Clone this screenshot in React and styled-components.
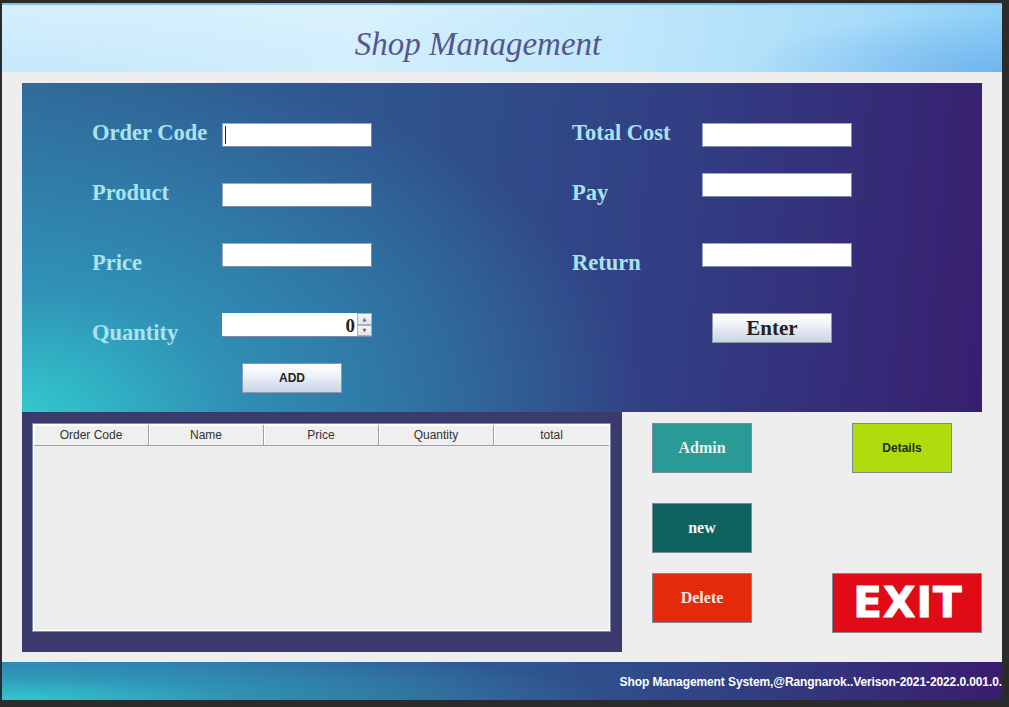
import styled, { createGlobalStyle } from 'styled-components';

const GlobalStyle = createGlobalStyle`
    html, body {
        margin: 0;
        padding: 0;
        background: #2b2b2b;
    }
    * {
        box-sizing: border-box;
    }
`;

const Screen = styled.div`
    width: 1009px;
    height: 707px;
    padding: 3px 7px 7px 2px;
    background: #2b2b2b;
    overflow: hidden;
`;

const Window = styled.div`
    width: 1000px;
    height: 697px;
    display: flex;
    flex-direction: column;
    background: #eeeeee;
`;

const Header = styled.header`
    height: 69px;
    display: flex;
    align-items: center;
    justify-content: center;
    padding: 12px 48px 0 0;
    background:
        radial-gradient(ellipse 260px 60px at 100% 100%, rgba(100, 170, 235, 0.7) 0, rgba(100, 170, 235, 0) 100%),
        linear-gradient(172deg, rgba(255, 255, 255, 0.35) 0%, rgba(255, 255, 255, 0) 45%),
        linear-gradient(100deg, #bfe6fb 0%, #d4effd 35%, #c2e8fb 60%, #a8dcf9 85%, #8ccff6 100%);
    border-top: 2px solid #7fc0ea;
`;

const Title = styled.h1`
    margin: 0;
    font-family: "Liberation Serif", "DejaVu Serif", serif;
    font-style: italic;
    font-weight: normal;
    font-size: 33px;
    color: #55578c;
`;

const Body = styled.main`
    flex: 1;
    padding: 11px 20px 10px 20px;
    display: flex;
    flex-direction: column;
`;

const FormPanel = styled.section`
    height: 329px;
    display: grid;
    grid-template-columns: 480px 1fr;
    padding: 40px 0 0 70px;
    background:
        radial-gradient(ellipse 620px 360px at 0% 100%, rgba(50, 200, 206, 1) 0, rgba(48, 160, 192, 0.75) 35%, rgba(47, 120, 170, 0) 100%),
        linear-gradient(95deg, #2f6597 0%, #2f528e 40%, #323c82 70%, #381f70 100%);
`;

const Column = styled.div`
    display: flex;
    flex-direction: column;
`;

const Row = styled.div`
    display: grid;
    grid-template-columns: 130px 150px;
    align-items: start;
    height: 24px;
    margin-top: ${(p) => p.$gap || 0}px;
`;

const Label = styled.label`
    font-family: "Liberation Serif", "DejaVu Serif", serif;
    font-weight: bold;
    font-size: 22.5px;
    line-height: 24px;
    color: #a9e3f2;
    white-space: nowrap;
    margin-top: ${(p) => p.$shift || 0}px;
`;

const TextBox = styled.div`
    width: 150px;
    height: 24px;
    background: #ffffff;
    border: 1px solid #7d8bab;
    border-top-color: #9aa6c0;
    border-left-color: #9aa6c0;
    box-shadow: inset 1px 1px 0 #ffffff;
    position: relative;
`;

const Caret = styled.span`
    position: absolute;
    left: 2px;
    top: 2px;
    bottom: 2px;
    width: 1px;
    background: #222;
`;

const Spinner = styled.div`
    width: 150px;
    height: 24px;
    display: flex;
    background: #ffffff;
    border-bottom: 1px solid #7d8bab;
`;

const SpinValue = styled.div`
    flex: 1;
    text-align: right;
    padding-right: 2px;
    font-family: "Liberation Serif", serif;
    font-weight: bold;
    font-size: 19px;
    line-height: 26px;
    color: #222;
`;

const SpinArrows = styled.div`
    width: 15px;
    display: flex;
    flex-direction: column;
`;

const SpinArrow = styled.div`
    flex: 1;
    display: flex;
    align-items: center;
    justify-content: center;
    background: linear-gradient(#f6f6f6, #dfe3ea);
    border: 1px solid #a8b0c0;
    font-size: 5px;
    color: #666;
    font-family: "DejaVu Sans", sans-serif;
`;

const GlossButton = styled.button`
    width: ${(p) => p.$w}px;
    height: ${(p) => p.$h}px;
    margin-top: ${(p) => p.$top}px;
    margin-left: ${(p) => p.$left}px;
    padding: 0;
    border: 1px solid #8a9ab2;
    background: linear-gradient(#ffffff 0%, #eef2f8 40%, #c9d3e3 100%);
    color: #222;
    font-family: ${(p) => (p.$serif ? '"Liberation Serif", serif' : '"Liberation Sans", Arial, sans-serif')};
    font-weight: bold;
    font-size: ${(p) => p.$size}px;
    cursor: pointer;
`;

const Lower = styled.div`
    height: 240px;
    display: flex;
`;

const TableFrame = styled.div`
    width: 600px;
    height: 240px;
    padding: 11px 11px 20px 10px;
    background: #3b3a6d;
`;

const Table = styled.div`
    height: 100%;
    border: 1px solid #7d8bab;
    box-shadow: inset 0 0 0 1px #ffffff;
    background: #eeeeee;
    padding: 1px;
`;

const HeadRow = styled.div`
    display: grid;
    grid-template-columns: repeat(5, 1fr);
    height: 20px;
`;

const HeadCell = styled.div`
    border-right: 1px solid #a0a0a0;
    border-bottom: 1px solid #a0a0a0;
    background: #efefef;
    box-shadow: inset 1px 1px 0 #ffffff;
    text-align: center;
    font-family: "Liberation Sans", Arial, sans-serif;
    font-size: 12px;
    line-height: 20px;
    color: #333;

    &:last-child {
        border-right: none;
    }
`;

const ActionGrid = styled.div`
    display: grid;
    grid-template-columns: 180px 150px;
    grid-template-rows: 80px 70px 60px;
    align-items: start;
    padding: 11px 0 0 30px;
`;

const ActionButton = styled.button`
    width: ${(p) => p.$w || 100}px;
    height: ${(p) => p.$h || 50}px;
    margin-left: ${(p) => p.$left || 0}px;
    padding: 0;
    border: 1px solid #7b8a99;
    background: ${(p) => p.$bg};
    color: ${(p) => p.$fg};
    font-family: ${(p) => (p.$serif ? '"Liberation Serif", serif' : '"Liberation Sans", Arial, sans-serif')};
    font-weight: bold;
    font-size: ${(p) => p.$size || 16}px;
    cursor: pointer;
`;

const ExitButton = styled.button`
    width: 150px;
    height: 60px;
    padding: 0 0 0 2px;
    border: 1px solid #7b8a99;
    background: #e10a17;
    color: #ffffff;
    font-family: "DejaVu Sans", "Liberation Sans", sans-serif;
    font-weight: 900;
    font-size: 42px;
    line-height: 1;
    letter-spacing: 1px;
    -webkit-text-stroke: 1px #ffffff;
    cursor: pointer;
`;

const Footer = styled.footer`
    height: 38px;
    display: flex;
    align-items: center;
    justify-content: flex-end;
    overflow: hidden;
    background:
        radial-gradient(ellipse 600px 60px at 0% 100%, rgba(50, 200, 206, 1) 0, rgba(48, 170, 196, 0.6) 40%, rgba(47, 120, 170, 0) 100%),
        linear-gradient(90deg, #2f7aa8 0%, #2f5e94 40%, #2f4a8a 65%, #35307a 85%, #3a1c6e 100%);
`;

const FooterText = styled.span`
    font-family: "Liberation Sans", Arial, sans-serif;
    font-weight: bold;
    font-size: 12px;
    letter-spacing: -0.1px;
    color: #ffffff;
    white-space: nowrap;
    padding-top: 2px;
`;

const columns = ['Order Code', 'Name', 'Price', 'Quantity', 'total'];

function App() {
    return (
        <>
            <GlobalStyle />
            <Screen>
                <Window>
                    <Header>
                        <Title>Shop Management</Title>
                    </Header>
                    <Body>
                        <FormPanel>
                            <Column>
                                <Row>
                                    <Label $shift={-2}>Order Code</Label>
                                    <TextBox><Caret /></TextBox>
                                </Row>
                                <Row $gap={36}>
                                    <Label $shift={-2}>Product</Label>
                                    <TextBox />
                                </Row>
                                <Row $gap={36}>
                                    <Label $shift={8}>Price</Label>
                                    <TextBox />
                                </Row>
                                <Row $gap={46}>
                                    <Label $shift={8}>Quantity</Label>
                                    <Spinner>
                                        <SpinValue>0</SpinValue>
                                        <SpinArrows>
                                            <SpinArrow>▲</SpinArrow>
                                            <SpinArrow>▼</SpinArrow>
                                        </SpinArrows>
                                    </Spinner>
                                </Row>
                                <GlossButton $w={100} $h={30} $top={26} $left={150} $size={12}>
                                    ADD
                                </GlossButton>
                            </Column>
                            <Column>
                                <Row>
                                    <Label $shift={-2}>Total Cost</Label>
                                    <TextBox />
                                </Row>
                                <Row $gap={26}>
                                    <Label $shift={8}>Pay</Label>
                                    <TextBox />
                                </Row>
                                <Row $gap={46}>
                                    <Label $shift={8}>Return</Label>
                                    <TextBox />
                                </Row>
                                <GlossButton $w={120} $h={30} $top={46} $left={140} $size={21} $serif>
                                    Enter
                                </GlossButton>
                            </Column>
                        </FormPanel>
                        <Lower>
                            <TableFrame>
                                <Table>
                                    <HeadRow>
                                        {columns.map((c) => (
                                            <HeadCell key={c}>{c}</HeadCell>
                                        ))}
                                    </HeadRow>
                                </Table>
                            </TableFrame>
                            <ActionGrid>
                                <ActionButton $bg="#2a9a97" $fg="#e6f2f0" $serif>Admin</ActionButton>
                                <ActionButton $bg="#b0dc0e" $fg="#1f2a10" $left={20} $size={12}>Details</ActionButton>
                                <ActionButton $bg="#0e6361" $fg="#eef6f5" $serif>new</ActionButton>
                                <span />
                                <ActionButton $bg="#e52a0c" $fg="#ffe6de" $serif>Delete</ActionButton>
                                <ExitButton>EXIT</ExitButton>
                            </ActionGrid>
                        </Lower>
                    </Body>
                    <Footer>
                        <FooterText>Shop Management System,@Rangnarok..Verison-2021-2022.0.001.0.</FooterText>
                    </Footer>
                </Window>
            </Screen>
        </>
    );
}

export default App;
